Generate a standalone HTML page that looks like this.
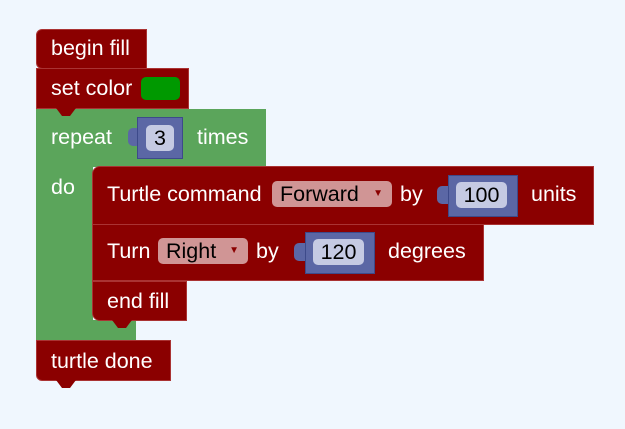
<!DOCTYPE html><html><head><style>
body{margin:0;width:625px;height:429px;background:#f0f7fe;position:relative;overflow:hidden;font-family:"Liberation Sans",sans-serif;font-size:21.5px}
div{position:absolute;box-sizing:border-box}
.r{background:#8b0000;border:1px solid #a33;border-radius:6px 0 0 6px}
.t{color:#fff;white-space:nowrap;line-height:24px}
.g{background:#5ba55b}
.n{background:#5b67a5;border:1px solid #3d4a8a}
.in{background:#c5cae3;border-radius:5px;color:#000;text-align:center;line-height:26px}
.tab{background:#5b67a5;border-radius:5px 0 0 5px;width:12px;height:18px}
.dd{background:#d09595;border-radius:5px;color:#000;line-height:26px;padding-left:8px}
.dd span{color:#8b0000;font-size:10px;position:absolute;right:9px;top:0}
.nt{width:20px;height:8px;background:#8b0000;clip-path:polygon(0 0,100% 0,70% 100%,30% 100%)}
</style></head><body>
<div class="r" style="left:36px;top:29px;width:111px;height:40px"></div>
<div class="t" style="left:51px;top:36px">begin fill</div>
<div class="r" style="left:36px;top:68px;width:153px;height:41px;border-radius:0"></div>
<div class="t" style="left:51px;top:76px">set color</div>
<div style="left:141px;top:77px;width:39px;height:23px;background:#009900;border-radius:5px"></div>
<div class="g" style="left:36px;top:109px;width:230px;height:58px"></div>
<div class="g" style="left:36px;top:166px;width:57px;height:174px"></div>
<div class="g" style="left:36px;top:320px;width:100px;height:20px"></div>
<div class="nt" style="left:56px;top:108px"></div>
<div class="t" style="left:51px;top:125px">repeat</div>
<div class="t" style="left:197px;top:125px">times</div>
<div class="t" style="left:51px;top:175px">do</div>
<div class="tab" style="left:128px;top:128px"></div>
<div class="n" style="left:137px;top:117px;width:46px;height:42px"></div>
<div class="in" style="left:146px;top:125px;width:28px;height:26px">3</div>
<div class="r" style="left:92px;top:166px;width:502px;height:59px;border-radius:8px 0 0 0"></div>
<div class="t" style="left:107px;top:182px">Turtle command</div>
<div class="dd" style="left:272px;top:181px;width:120px;height:26px">Forward<span>▼</span></div>
<div class="t" style="left:400px;top:182px">by</div>
<div class="tab" style="left:437px;top:186px"></div>
<div class="n" style="left:448px;top:175px;width:70px;height:42px"></div>
<div class="in" style="left:456px;top:182px;width:51px;height:26px">100</div>
<div class="t" style="left:531px;top:182px">units</div>
<div class="r" style="left:92px;top:224px;width:392px;height:57px;border-radius:0"></div>
<div class="t" style="left:107px;top:239px">Turn</div>
<div class="dd" style="left:158px;top:238px;width:90px;height:26px">Right<span>▼</span></div>
<div class="t" style="left:256px;top:239px">by</div>
<div class="tab" style="left:294px;top:243px"></div>
<div class="n" style="left:305px;top:232px;width:70px;height:42px"></div>
<div class="in" style="left:313px;top:239px;width:51px;height:26px">120</div>
<div class="t" style="left:388px;top:239px">degrees</div>
<div class="r" style="left:92px;top:281px;width:95px;height:40px;border-radius:0 0 0 8px"></div>
<div class="t" style="left:107px;top:289px">end fill</div>
<div class="nt" style="left:112px;top:320px"></div>
<div class="r" style="left:36px;top:340px;width:135px;height:41px;border-radius:0 0 0 6px"></div>
<div class="t" style="left:51px;top:349px">turtle done</div>
<div class="nt" style="left:56px;top:380px"></div>
</body></html>
